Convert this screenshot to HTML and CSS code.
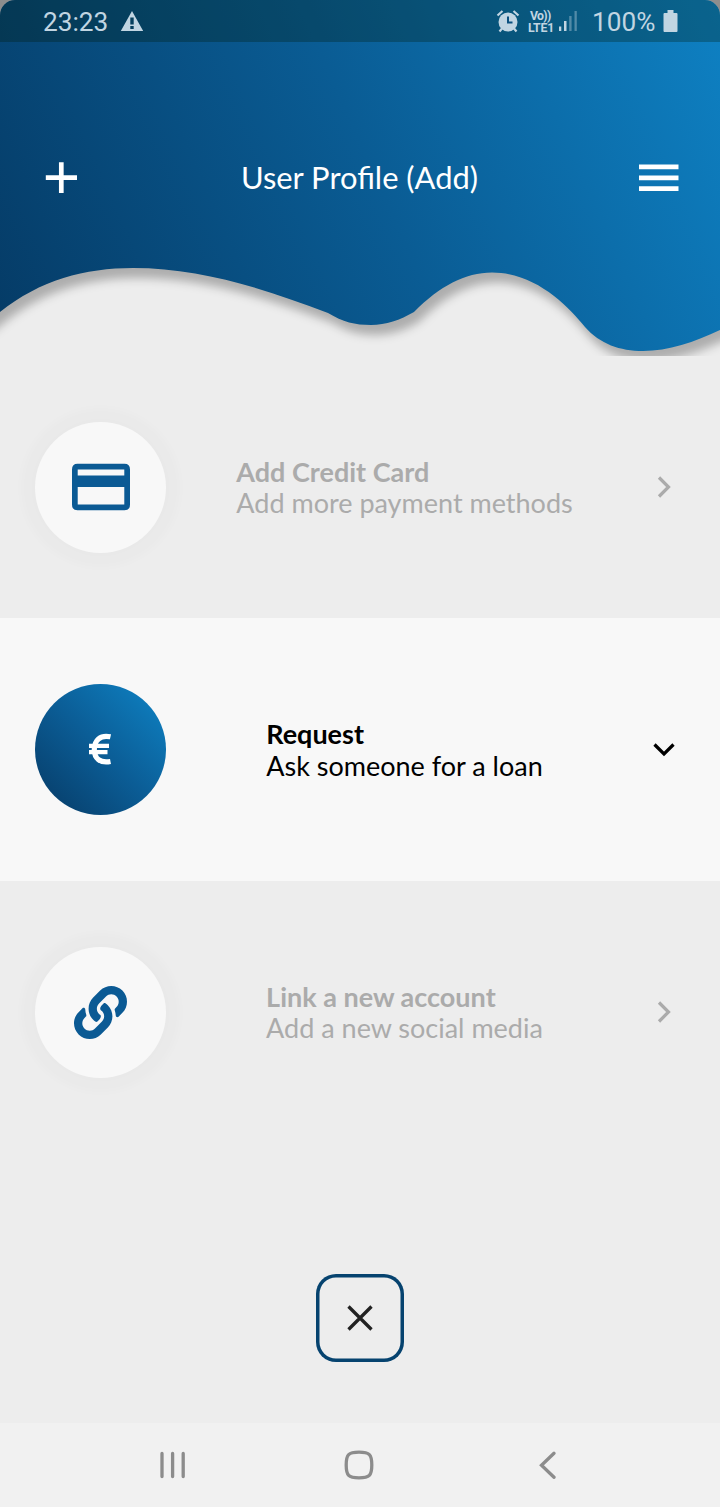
FILE: index.html
```html
<!DOCTYPE html>
<html lang="en">
<head>
<meta charset="utf-8">
<title>User Profile (Add)</title>
<link rel="stylesheet" href="styles.css">
</head>
<body>
<div class="screen">
  <header class="header">
    <svg class="wave" width="720" height="356" viewBox="0 0 720 356" aria-hidden="true">
      <defs>
        <linearGradient id="sea" gradientUnits="userSpaceOnUse" x1="0" y1="340" x2="720" y2="20">
          <stop offset="0" stop-color="#053b66"/>
          <stop offset=".52" stop-color="#0a5c94"/>
          <stop offset="1" stop-color="#0e80c2"/>
        </linearGradient>
        <filter id="soft" x="-5%" y="-5%" width="110%" height="115%">
          <feGaussianBlur stdDeviation="5"/>
        </filter>
      </defs>
      <path transform="translate(5 10)" filter="url(#soft)" fill="#000" fill-opacity=".27" d="M-20-20V328L0 312C40 280 85 268 133 268C200 268 262 288 328 313C343 322 355 325 371 325C386 325 400 320 414 312C440 286 465 272.500 492 272.500C535 272.500 567 305 585 327C600 344 620 351 643 351C668 351 695 342 720 330L740 320V-20Z"/>
      <path fill="url(#sea)" d="M0 0V312C40 280 85 268 133 268C200 268 262 288 328 313C343 322 355 325 371 325C386 325 400 320 414 312C440 286 465 272.500 492 272.500C535 272.500 567 305 585 327C600 344 620 351 643 351C668 351 695 342 720 330V0Z"/>
    </svg>
    <div class="status">
      <span class="time">23:23</span>
      <svg class="warning" width="24" height="22" viewBox="0 0 24 22"><path fill="currentColor" fill-rule="evenodd" d="M12 1 23.200 21H.8ZM10.300 7.500V14.500H13.700V7.500ZM10.300 16V19H13.700V16Z"/></svg>
      <svg class="alarm" width="24" height="24" viewBox="0 0 24 24"><g fill="none" stroke="currentColor" stroke-width="2.200"><path d="M1.500 6.500 6.500 2M22.500 6.500 17.500 2M6 19.500 3.500 22.500M18 19.500 20.500 22.500"/></g><circle cx="12" cy="13" r="9.500" fill="currentColor"/><path d="M12 7.500V13.500H16.500" fill="none" stroke="#0b507f" stroke-width="2"/></svg>
      <span class="volte"><span class="vo">Vo))</span><span>LTE1</span></span>
      <svg class="signal" width="20" height="22" viewBox="0 0 20 22" fill="currentColor"><path d="M1 16.500H3.300V21H1ZM6 11H8.500V21H6Z"/><path opacity=".4" d="M11.200 6H13.600V21H11.200ZM16.500 1H18.800V21H16.500Z"/></svg>
      <span class="percent">100%</span>
      <svg class="battery" width="15" height="22" viewBox="0 0 15 22"><path fill="currentColor" d="M4.500 0H10.500V3H13.500Q14.500 3 14.500 4V21Q14.500 22 13.500 22H1.500Q.5 22 .5 21V4Q.5 3 1.500 3H4.500Z"/></svg>
    </div>
    <div class="titlebar">
      <svg width="32" height="32" viewBox="0 0 32 32"><path d="M.8 15.600H32M16.300 .3V31" stroke="#fff" stroke-width="4.700"/></svg>
      <h1 class="title">User Profile (Add)</h1>
      <svg width="40" height="28" viewBox="0 0 40 28"><path d="M0 2.800H39.500M0 13.800H39.500M0 24.700H39.500" stroke="#fff" stroke-width="4.700"/></svg>
    </div>
  </header>
  <main class="list">
    <section class="row">
      <div class="disc"><svg width="60" height="48" viewBox="0 0 60 48"><path fill="#0b5a94" fill-rule="evenodd" d="M6.500.8H53.500Q59 .8 59 6.500V41.500Q59 47.200 53.500 47.200H6.500Q1 47.200 1 41.500V6.500Q1 .8 6.500 .8ZM6.700 6.500V12.500H53.300V6.500ZM6.700 24V41.500H53.300V24Z"/></svg></div>
      <div class="label"><div><h2>Add Credit Card</h2><p>Add more payment methods</p></div></div>
      <svg class="chevron" width="24" height="24" viewBox="0 0 24 24"><path d="M7 2.500 16.500 12 7 21.500"/></svg>
    </section>
    <section class="row active">
      <div class="disc"><svg width="24" height="34" viewBox="0 0 24 34"><g fill="none" stroke="#fff"><path stroke-width="5.200" d="M21.500 3.800C11 1.500 5.300 7.500 5.300 16.500S11 30.500 21.500 28.500"/><path stroke-width="4.200" d="M0 12.800H20M0 19.200H18.500"/></g></svg></div>
      <div class="label"><div><h2>Request</h2><p>Ask someone for a loan</p></div></div>
      <svg class="chevron" width="24" height="24" viewBox="0 0 24 24"><path d="M2.500 6.500 12 16 21.500 6.500"/></svg>
    </section>
    <section class="row">
      <div class="disc"><svg width="53" height="53" viewBox="0 0 512 512"><path fill="#0b5a94" d="M326.612 185.391c59.747 59.809 58.927 155.698.36 214.590-.11.120-.24.250-.36.370l-67.200 67.200c-59.270 59.270-155.699 59.262-214.960 0-59.270-59.260-59.270-155.700 0-214.960l37.106-37.106c9.840-9.840 26.786-3.300 27.294 10.606.648 17.722 3.826 35.527 9.690 52.721 1.986 5.822.567 12.262-3.783 16.612l-13.087 13.087c-28.026 28.026-28.905 73.660-1.155 101.960 28.024 28.579 74.086 28.749 102.325.510l67.200-67.190c28.191-28.191 28.073-73.757 0-101.830-3.701-3.694-7.429-6.564-10.341-8.569a16.037 16.037 0 0 1-6.947-12.606c-.396-10.567 3.348-21.456 11.698-29.806l21.054-21.055c5.521-5.521 14.182-6.199 20.584-1.731a152.482 152.482 0 0 1 20.522 17.197zM467.547 44.449c-59.261-59.262-155.690-59.270-214.960 0l-67.200 67.200c-.120.120-.250.250-.360.370-58.566 58.892-59.387 154.781.360 214.590a152.454 152.454 0 0 0 20.521 17.196c6.402 4.468 15.064 3.789 20.584-1.731l21.054-21.055c8.350-8.350 12.094-19.239 11.698-29.806a16.037 16.037 0 0 0-6.947-12.606c-2.912-2.005-6.640-4.875-10.341-8.569-28.073-28.073-28.191-73.639 0-101.830l67.200-67.190c28.239-28.239 74.300-28.069 102.325.510 27.750 28.300 26.872 73.934-1.155 101.960l-13.087 13.087c-4.350 4.350-5.769 10.790-3.783 16.612 5.864 17.194 9.042 34.999 9.690 52.721.509 13.906 17.454 20.446 27.294 10.606l37.106-37.106c59.271-59.259 59.271-155.699.001-214.959z"/></svg></div>
      <div class="label"><div><h2>Link a new account</h2><p>Add a new social media</p></div></div>
      <svg class="chevron" width="24" height="24" viewBox="0 0 24 24"><path d="M7 2.500 16.500 12 7 21.500"/></svg>
    </section>
  </main>
  <div class="closer">
    <div class="close"><svg width="28" height="28" viewBox="0 0 28 28"><path d="M2.500 2.500 25.500 25.500M25.500 2.500 2.500 25.500" stroke="#222" stroke-width="3.300"/></svg></div>
  </div>
  <nav class="nav">
    <svg width="28" height="28" viewBox="0 0 28 28"><path d="M3 2.500V25.500M13.600 2.500V25.500M24.200 2.500V25.500"/></svg>
    <svg class="home" width="30" height="30" viewBox="0 0 30 30"><path d="M15 2.200C25.500 2.200 27.800 4.500 27.800 15S25.500 27.800 15 27.800 2.200 25.500 2.200 15 4.500 2.200 15 2.200Z"/></svg>
    <svg width="18" height="28" viewBox="0 0 18 28"><path d="M15 2.300 2.500 14.300 15 26.300"/></svg>
  </nav>
</div>
</body>
</html>
```
FILE: styles.css
```css
* { box-sizing: border-box; }
body { margin: 0; background: #8d8d8d; font-family: Lato, sans-serif; }
.screen { width: 720px; height: 1507px; display: flex; flex-direction: column; background: #ededed; overflow: hidden; border-radius: 15px 15px 0 0; }
.header { position: relative; height: 356px; flex: none; }
.wave { position: absolute; inset: 0; display: block; }
.status { position: relative; height: 42px; padding: 0 42px 0 43px; display: flex; align-items: center; background: rgba(0, 22, 0, .27); color: #c1d5e2; font-family: Roboto, sans-serif; font-size: 26.200px; line-height: 42px; }
.status span { padding-top: 2px; }
.time { width: 66px; }
.warning { margin-left: 11px; }
.alarm { margin-left: auto; }
.volte { display: flex; flex-direction: column; width: 27px; margin-left: 8px; font-size: 12.300px; line-height: 12px; font-weight: 700; letter-spacing: -.2px; }
.volte span { padding: 0; }
.volte .vo { padding-left: 2px; letter-spacing: -.7px; }
.signal { margin-left: 3px; }
.percent { width: 64px; margin-left: 14px; }
.battery { margin-left: 7px; }
.titlebar { position: relative; height: 40px; margin-top: 116px; padding: 0 41px 0 45px; display: flex; align-items: center; justify-content: space-between; }
.title { margin: 0; padding-left: 3px; font-size: 30.900px; line-height: 38px; font-weight: 400; color: #fff; }
.list { display: grid; grid-template-rows: 262px 263px 262px; flex: none; }
.row { display: flex; align-items: center; padding: 0 44px 0 35px; color: #ababab; }
.active { background: #f8f8f8; color: #000; }
.disc { width: 131px; height: 131px; flex: none; display: flex; align-items: center; justify-content: center; border-radius: 50%; background: #f8f8f8; box-shadow: 0 0 8px 14px rgba(0, 0, 0, .016); }
.active .disc { background: linear-gradient(45deg, #073d69 5%, #0b5d96 50%, #0e80c1 95%); box-shadow: none; }
.label { flex: 1; display: flex; justify-content: center; margin: 0 -24px 0 47px; }
.label h2, .label p { margin: 0; font-size: 27px; line-height: 31px; white-space: nowrap; }
.label p { font-weight: 400; }
.active h2 { line-height: 32px; }
.chevron { flex: none; margin-left: 80px; fill: none; stroke: currentColor; stroke-width: 3.200; }
.closer { flex: 1; display: flex; justify-content: center; padding-top: 131px; }
.close { width: 88px; height: 88px; display: flex; align-items: center; justify-content: center; box-shadow: inset 0 0 0 3.500px #06436f; border-radius: 20px; }
.nav { height: 84px; flex: none; display: flex; align-items: center; justify-content: space-between; padding: 0 163px 0 159px; background: #f1f1f1; }
.nav svg { fill: none; stroke: #8c8c8c; stroke-width: 3.300; stroke-linecap: round; }
.nav .home { margin-right: 8px; }
```
